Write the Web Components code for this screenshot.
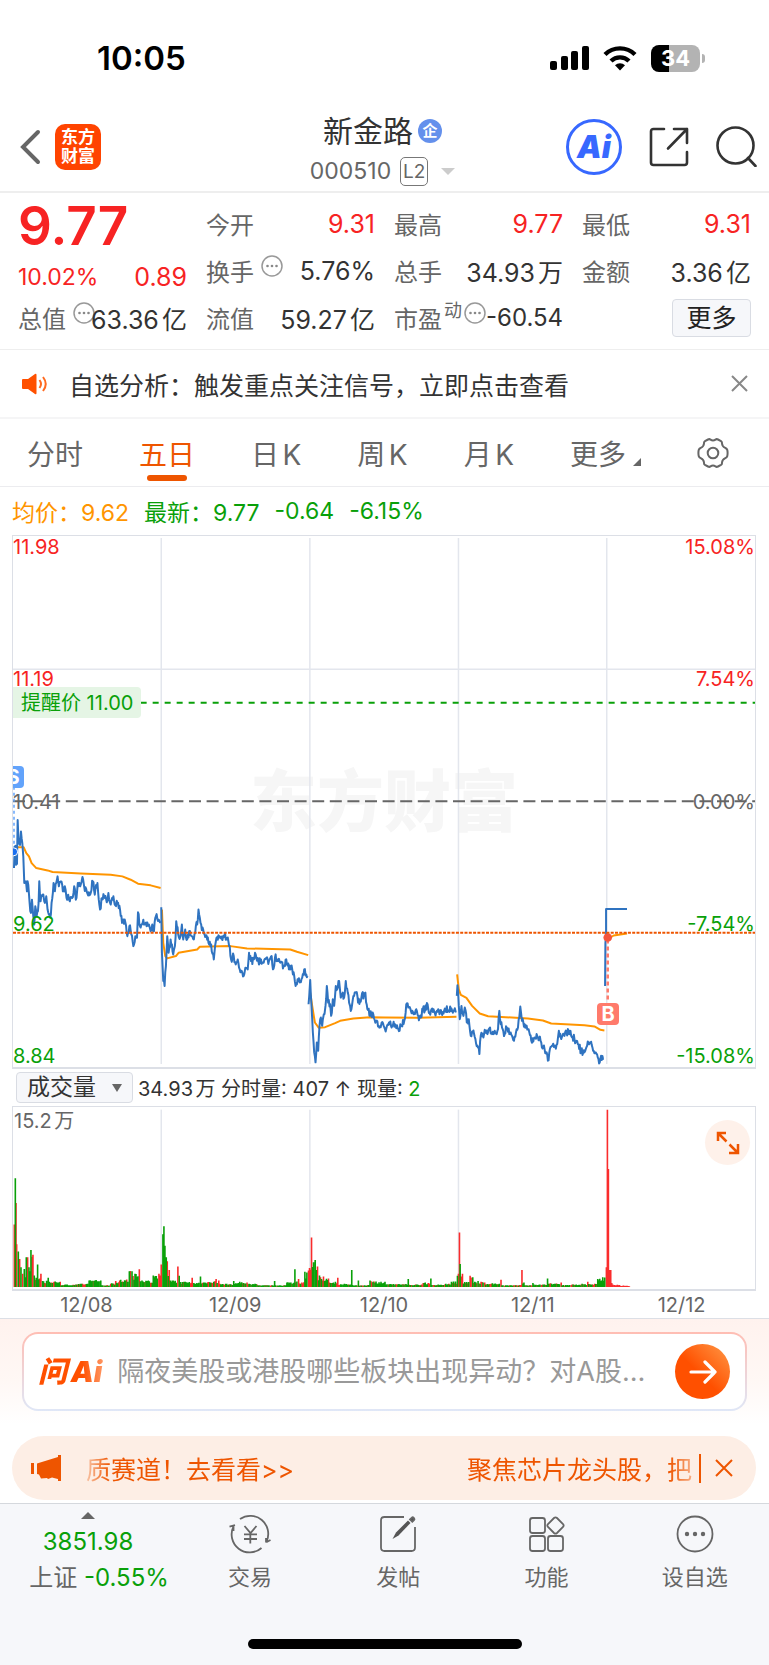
<!DOCTYPE html>
<html lang="zh-CN">
<head>
<meta charset="utf-8">
<meta name="viewport" content="width=device-width, initial-scale=1">
<title>新金路 000510</title>
<style>
  html { background: #f6f7fa; }
  body {
    margin: 0;
    background: #fff;
    color: #333;
    font-family: Inter, "Noto Sans CJK SC", sans-serif;
    font-size: 24px;
    text-autospace: normal;
    --red: #f72323;
    --green: #09a009;
    --orange: #ee5500;
    --gray: #666;
    --line: #dcdfe6;
  }
</style>
</head>
<body>
<status-bar time="10:05" battery="34"></status-bar>
<stock-header name="新金路" code="000510"></stock-header>
<quote-panel></quote-panel>
<notice-bar>自选分析：触发重点关注信号，立即点击查看</notice-bar>
<period-tabs active="1"></period-tabs>
<price-chart></price-chart>
<volume-chart></volume-chart>
<ask-ai></ask-ai>
<promo-ticker>
  <span>质赛道！去看看&gt;&gt;</span>
  <span>聚焦芯片龙头股，把</span>
</promo-ticker>
<bottom-nav></bottom-nav>

<script>
const BASE = `<style>
  *, :host { box-sizing: border-box; }
  :host { display: block; }
  button { font: inherit; color: inherit; background: none; border: 0; padding: 0; margin: 0; cursor: pointer; }
  a { color: inherit; text-decoration: none; }
  svg { display: block; }
</style>`;

class BaseElement extends HTMLElement {
  constructor() {
    super();
    this.attachShadow({ mode: 'open' });
  }
  connectedCallback() {
    this.shadowRoot.innerHTML = BASE + this.template();
  }
}

class StatusBar extends BaseElement {
  template() {
    return `<style>
      :host { display: flex; justify-content: space-between; align-items: center; height: 110px; padding: 6px 64px 0 97px; color: #000; }
      time { font-size: 33px; font-weight: 600; }
      .right { display: flex; align-items: center; gap: 14px; }
      .battery { display: flex; align-items: center; gap: 2px; }
      .level { width: 49px; height: 27px; border-radius: 8px; background: linear-gradient(90deg, #000 36%, #b3b3b3 36%); color: #fff; font-size: 22px; font-weight: 700; line-height: 27px; text-align: center; }
      .cap { width: 3px; height: 9px; border-radius: 0 4px 4px 0; background: #b3b3b3; }
    </style>
    <time>${this.getAttribute('time')}</time>
    <div class="right">
      <svg width="39" height="25" viewBox="0 0 39 25"><rect y="15" width="7" height="9" rx="2"/><rect x="11" y="10" width="7" height="14" rx="2"/><rect x="21" y="5" width="7" height="19" rx="2"/><rect x="32" width="7" height="24" rx="2"/></svg>
      <svg width="34" height="25" viewBox="0 0 34 25" fill="none" stroke="#000" stroke-width="4.4"><path d="M2 8.500a21.500 21.500 0 0 1 30 0"/><path d="M8 15a13 13 0 0 1 18 0"/><path d="M12 19.200a7.500 7.500 0 0 1 10 0L17 24.500z" fill="#000" stroke="none"/></svg>
      <div class="battery"><div class="level">${this.getAttribute('battery')}</div><div class="cap"></div></div>
    </div>`;
  }
}

class StockHeader extends BaseElement {
  template() {
    return `<style>
      :host { display: grid; grid-template-columns: 1fr auto 1fr; align-items: center; height: 83px; padding: 0 12px 0 8px; border-bottom: 2px solid #eee; }
      .left, .right, .name, .code { display: flex; align-items: center; }
      .left { gap: 13px; margin: 0 0 8px 12px; }
      .right { justify-content: flex-end; gap: 27px; margin-bottom: 8px; }
      .logo { width: 46px; height: 46px; border-radius: 10px; background: #ff4400; color: #fff; font-size: 17px; line-height: 19px; font-weight: 700; text-align: center; padding: 4px 2px; }
      .name { justify-content: center; gap: 5px; height: 41px; font-size: 30px; line-height: 40px; }
      .badge { width: 24px; height: 24px; border-radius: 50%; background: #6490ec; color: #fff; font-size: 15px; font-weight: 700; line-height: 24px; text-align: center; }
      .code { gap: 9px; height: 40px; font-size: 23px; color: var(--gray); }
      .l2 { width: 28px; height: 29px; border: 1px solid #777; border-radius: 5px; font-size: 19px; line-height: 27px; text-align: center; }
      .drop { border: 7px solid transparent; border-top: 7px solid #ccc; border-bottom: 0; margin-left: 4px; }
      .ai { width: 56px; height: 56px; border: 3px solid #3768ff; border-radius: 50%; color: #3768ff; font-size: 31px; font-weight: 900; line-height: 48px; font-style: italic; text-align: center; }
    </style>
    <div class="left">
      <button aria-label="返回"><svg width="22" height="36" viewBox="0 0 22 36" fill="none" stroke="#666" stroke-width="4" stroke-linecap="round"><path d="M18 3 3 18l15 15"/></svg></button>
      <div class="logo">东方<br>财富</div>
    </div>
    <div>
      <div class="name"><span>${this.getAttribute('name')}</span><span class="badge">企</span></div>
      <div class="code"><span>${this.getAttribute('code')}</span><span class="l2">L2</span><i class="drop"></i></div>
    </div>
    <div class="right">
      <button class="ai">Ai</button>
      <button aria-label="分享"><svg width="40" height="40" viewBox="0 0 40 40" fill="none" stroke="#333" stroke-width="2.600" stroke-linecap="round" stroke-linejoin="round"><path d="M15 2H4.500Q2 2 2 4.500v31Q2 38 4.500 38h31q2.500 0 2.500-2.500V25M25 2h13v14M38 2 19 21.500"/></svg></button>
      <button aria-label="搜索"><svg width="41" height="41" viewBox="0 0 41 41" fill="none" stroke="#333" stroke-width="2.600" stroke-linecap="round"><circle cx="19.500" cy="19.500" r="18"/><path d="m32 32 7.500 8"/></svg></button>
    </div>`;
  }
}

const MORE_DOTS = `<svg class="dots" width="22" height="22" viewBox="0 0 22 22"><circle cx="11" cy="11" r="10" fill="none" stroke="#999" stroke-width="1.500"/><g fill="#888"><circle cx="6.500" cy="11" r="1.300"/><circle cx="11" cy="11" r="1.300"/><circle cx="15.500" cy="11" r="1.300"/></g></svg>`;

// 一格行情：label + 数值，note 为右上角小字，info 显示说明图标
class QuoteItem extends BaseElement {
  template() {
    const note = this.getAttribute('note');
    return `<style>
      :host { display: flex; justify-content: space-between; align-items: center; height: 47px; font-size: 24px; white-space: nowrap; }
      .label { display: flex; align-items: center; min-width: 0; color: var(--gray); }
      .label svg { flex: none; margin: 0 0 10px 7px; }
      .label sup { font-size: 18px; line-height: 22px; align-self: flex-start; vertical-align: baseline; margin-left: 2px; }
      .label sup + svg { margin-left: 2px; }
      .value { font-size: 25px; }
      :host([up]) .value { color: var(--red); }
      :host([note]) .value { font-size: 24px; }
    </style>
    <span class="label"><span>${this.getAttribute('label')}</span>${note ? `<sup>${note}</sup>` : ''}${this.hasAttribute('info') ? MORE_DOTS : ''}</span>
    <span class="value"><slot></slot></span>`;
  }
}

class QuotePanel extends BaseElement {
  template() {
    return `<style>
      :host { display: grid; grid-template-columns: repeat(4, minmax(0, 1fr)); column-gap: 19px; padding: 7px 18px 8px; border-bottom: 1px solid #eee; color: #333; }
      .main { color: var(--red); }
      .price { height: 60px; font-size: 53px; font-weight: 600; line-height: 52px; }
      .change { display: flex; justify-content: space-between; align-items: center; height: 34px; font-size: 25px; }
      .change span:first-child { font-size: 23px; }
      .main quote-item { color: #333; }
      .more { justify-self: end; align-self: center; width: 79px; height: 38px; background: #f6f7fa; border: 1px solid #d9dce3; border-radius: 4px; font-size: 25px; line-height: 34px; color: #222; }
      .cell { display: grid; grid-template-rows: repeat(3, 47px); }
    </style>
    <div class="main">
      <div class="price">9.77</div>
      <div class="change"><span>10.02%</span><span>0.89</span></div>
      <quote-item label="总值" info>63.36亿</quote-item>
    </div>
    <div class="cell"><quote-item label="今开" up>9.31</quote-item><quote-item label="换手" info>5.76%</quote-item><quote-item label="流值">59.27亿</quote-item></div>
    <div class="cell"><quote-item label="最高" up>9.77</quote-item><quote-item label="总手">34.93万</quote-item><quote-item label="市盈" note="动" info>-60.54</quote-item></div>
    <div class="cell"><quote-item label="最低" up>9.31</quote-item><quote-item label="金额">3.36亿</quote-item><button class="more">更多</button></div>`;
  }
}

class NoticeBar extends BaseElement {
  template() {
    return `<style>
      :host { display: flex; align-items: center; height: 69px; padding: 0 21px; font-size: 25px; border-bottom: 2px solid #f5f5f6; }
      .text { flex: 1; margin-left: 21px; }
    </style>
    <svg width="27" height="22" viewBox="0 0 27 22"><path d="M1 7q0-1 1-1h5l7-5q1.500-1 1.500 1v18q0 2-1.500 1l-7-5H2q-1 0-1-1z" fill="#ff5000"/><path d="M18.500 7q3 4 0 8M22 4q5.500 7 0 14" fill="none" stroke="#ff6a20" stroke-width="2"/></svg>
    <span class="text"><slot></slot></span>
    <button aria-label="关闭"><svg width="17" height="17" viewBox="0 0 17 17" stroke="#888" stroke-width="2"><path d="m1 1 15 15M16 1 1 16"/></svg></button>`;
  }
}

class PeriodTabs extends BaseElement {
  template() {
    const active = Number(this.getAttribute('active'));
    const tabs = ['分时', '五日', '日K', '周K', '月K'].map((name, i) =>
      `<button role="tab" aria-selected="${i === active}">${name}</button>`).join('');
    return `<style>
      :host { display: flex; justify-content: space-between; align-items: center; height: 68px; padding: 0 40px 0 27px; border-bottom: 1px solid #ececef; color: var(--gray); font-size: 28px; }
      button { display: grid; justify-items: center; align-content: center; height: 67px; position: relative; }
      [aria-selected=true] { color: var(--orange); }
      [aria-selected=true]::after { content: ""; position: absolute; left: 50%; bottom: 5px; width: 40px; height: 6px; margin-left: -20px; border-radius: 3px; background: var(--orange); }
      .more { display: flex; align-items: center; gap: 7px; }
      .more svg { align-self: flex-end; margin-bottom: 20px; }
    </style>
    ${tabs}
    <button class="more">更多<svg width="8" height="8" viewBox="0 0 8 8"><path d="M8 0v8H0z" fill="#666"/></svg></button>
    <button aria-label="设置"><svg width="32" height="30" viewBox="0 0 32 30" fill="none" stroke="#666" stroke-width="2"><path d="M11 1.500q1.500-.8 2.500.2 2.500 1.500 5 0 1-1 2.500-.2l3 1.600q1.200.7 1 2.400.3 3 3 4.200 2 .8 2.300 2.300.6 3 0 6-.3 1.500-2.300 2.300-2.700 1.200-3 4.200.2 1.700-1 2.400l-3 1.600q-1.500.8-2.500-.2-2.500-1.500-5 0-1 1-2.500.2l-3-1.600q-1.200-.7-1-2.400-.3-3-3-4.200-2-.8-2.300-2.300-.6-3 0-6 .3-1.500 2.300-2.300 2.700-1.200 3-4.200-.2-1.700 1-2.400z"/><circle cx="16" cy="15" r="5.300"/></svg></button>`;
  }
}

// 固定种子的随机数，保证每次渲染的走势一致
function createRandom(seed) {
  return () => {
    seed = (seed * 16807) % 2147483647;
    return seed / 2147483647;
  };
}

// 在关键点之间补分钟级别的抖动
function fillMinutes(points, amp, random) {
  const out = [];
  for (let i = 0; i < points.length - 2; i += 2) {
    const [x1, y1, x2, y2] = points.slice(i, i + 4);
    out.push(`${x1},${y1}`);
    for (let x = x1 + 2; x < x2 - 1; x += 2) {
      const y = y1 + (y2 - y1) * (x - x1) / (x2 - x1) + (random() - 0.5) * amp;
      out.push(`${x},${y.toFixed(1)}`);
    }
  }
  out.push(points.slice(-2).join());
  return out.join(' ');
}

const PRICE = [
  [39,385,41,320,44,318,45,375,48,372,50,240,53,310,57,315,60,275,64,310,67,350,70,430,75,425,78,455,80,425,86,490,90,520,93,480,97,530,100,555,103,500,107,530,113,490,115,425,119,485,125,465,130,485,136,470,140,510,148,535,152,490,158,430,162,455,170,410,174,440,180,425,186,455,192,440,197,475,202,465,207,485,214,475,220,440,225,480,231,430,238,440,245,412,250,440,260,462,268,465,276,425,282,465,290,430,294,480,298,510,304,475,310,470,318,488,323,460,328,490,338,470,342,495,350,490,358,510,364,550,372,540,380,590,386,560,392,585,398,620,404,590,409,595,412,518,418,560,426,550,432,555,438,560,445,555,450,575,455,555,460,575,466,530,474,540,480,545],
  [482,503,484,640,488,725,492,740,496,680,500,590,504,640,510,600,518,645,523,620,527,545,533,585,540,590,544,555,548,600,554,570,560,600,566,575,574,590,580,600,586,560,590,555,594,510,600,550,608,570,616,590,624,610,632,615,640,660,648,595,656,590,664,597,672,587,680,600,688,620,692,660,700,650,706,675,712,660,718,690,724,695,730,710,735,685,742,690,746,640,752,665,760,660,766,645,774,665,782,660,790,670,798,655,806,665,814,650,818,690,824,655,832,660,840,670,850,680,858,660,866,690,876,690,882,710,886,740,892,720,900,725,906,715,912,690,922,710],
  [925,795,930,722,934,800,938,880,942,940,946,970,950,910,954,935,958,860,962,835,966,860,971,825,976,800,980,740,984,790,990,795,993,830,998,780,1002,800,1007,740,1013,745,1017,725,1022,775,1028,760,1032,775,1037,725,1043,760,1050,800,1054,810,1060,770,1068,760,1074,790,1084,775,1096,760,1102,810,1110,830,1118,820,1128,845,1136,860,1145,850,1155,870,1161,860,1167,850,1175,865,1185,855,1195,870,1205,860,1213,845,1219,795,1225,805,1233,815,1241,825,1249,810,1255,830,1263,835,1269,810,1275,815,1283,795,1289,820,1297,808,1305,822,1315,810,1325,820,1335,808,1345,815,1355,808,1368,820],
  [1371,770,1373,738,1377,800,1380,840,1385,800,1391,830,1395,805,1401,850,1407,840,1413,890,1419,880,1427,900,1433,920,1439,945,1443,890,1451,895,1457,875,1463,885,1471,865,1477,885,1485,875,1491,885,1495,870,1499,815,1503,855,1509,870,1515,885,1521,865,1529,885,1537,890,1543,905,1549,880,1555,865,1562,802,1567,845,1575,855,1585,870,1595,905,1605,895,1615,895,1625,910,1635,930,1641,940,1645,965,1651,930,1657,920,1665,920,1673,915,1678,875,1685,900,1693,885,1701,880,1707,875,1715,890,1725,900,1735,915,1745,935,1755,940,1763,920,1771,910,1779,925,1789,940,1795,955,1801,970,1805,950,1813,960],
];
const LATEST = '1817,740 1818,610 1820,590 1820,508 1883,508';
const AVERAGE = [
  '40,322 68,322 76,340 84,350 92,370 106,385 140,392 155,397 240,401 330,405 365,410 390,420 412,432 450,437 480,445',
  '484,510 488,610 494,650 500,657 526,650 534,640 590,630 598,622 690,620 740,627 870,630 890,637 924,647',
  '930,760 936,800 944,850 956,866 975,864 1005,852 1020,845 1060,838 1110,834 1155,835 1255,836 1370,833',
  '1372,705 1377,750 1383,767 1400,776 1417,800 1440,823 1465,831 1585,838 1630,844 1655,853 1755,858 1785,862 1803,872 1815,874',
  '1823,600 1843,588 1883,582',
];

const GRID_X = [446, 893, 1340, 1786];

class PriceChart extends BaseElement {
  template() {
    const random = createRandom(20251212);
    const prices = PRICE.map((day) => `<polyline points="${fillMinutes(day, 24, random)}"/>`).join('');
    return `<style>
      :host { padding: 0 13px 0 12px; }
      .legend { display: flex; align-items: center; gap: 15px; height: 48px; font-size: 23px; color: var(--green); }
      .avg { color: #ff9500; }
      .plot { position: relative; height: 534px; border: 1px solid var(--line); border-width: 1px 1px 2px; overflow: hidden; font-size: 20px; line-height: 20px; }
      .plot svg { position: relative; width: 100%; height: 100%; }
      .plot svg * { vector-effect: non-scaling-stroke; }
      .mark { position: absolute; inset: 0; display: grid; place-items: center; font-size: 67px; font-weight: 900; color: #f6f6f6; }
      .axis { position: absolute; inset: 0; padding: 1px 0; display: grid; grid-template-rows: repeat(4, 1fr); }
      .axis.r { justify-items: end; }
      .axis.l { justify-items: start; }
      .axis span { grid-column: 1; color: var(--red); }
      .axis span:nth-child(n+4) { color: var(--green); align-self: end; }
      .axis span:nth-child(2) { grid-row: 2; }
      .axis span:nth-child(4) { grid-row: 3; }
      .axis span:nth-child(5) { grid-row: 4; }
      .axis .zero { grid-row: 2 / 4; align-self: center; color: var(--gray); }
      .alert { position: absolute; left: 0; top: 28.500%; display: flex; align-items: center; height: 31px; padding: 0 8px; border-radius: 0 4px 4px 0; background: #e5f5e5; color: var(--green); font-size: 20px; }
      .tag { position: absolute; width: 22px; height: 22px; border-radius: 4px; color: #fff; font-size: 20px; font-weight: 700; line-height: 22px; text-align: center; }
      .buy { left: 80.200%; top: 90%; margin: -11px 0 0 -11px; background: #ff7a6b; }
      .sell { left: -11px; top: 43.300%; background: #62a3fb; }
    </style>
    <div class="legend"><span class="avg">均价：9.62</span><span>最新：9.77</span><span>-0.64</span><span>-6.15%</span></div>
    <div class="plot">
      <div class="mark">东方财富</div>
      <svg viewBox="0 0 2232 1599" preserveAspectRatio="none" fill="none">
        <g stroke="#e3e6ed" stroke-width="1.500">${GRID_X.map((x) => `<path d="M${x} 6V1590"/>`).join('')}<path d="M0 401H2232"/></g>
        <path d="M384 502H2232" stroke="#09a009" stroke-width="2" stroke-dasharray="6 6"/>
        <path d="M0 799H2232" stroke="#666" stroke-width="2" stroke-dasharray="12 5.600"/>
        <g transform="translate(-36 615)" stroke-linejoin="round">
          <path d="M39 140V330" stroke="#62a3fb" stroke-width="1.500" stroke-dasharray="3 3"/>
          <g stroke="#ff9500" stroke-width="2">${AVERAGE.map((p) => `<polyline points="${p}"/>`).join('')}</g>
          <g stroke="#2f73c0" stroke-width="2">${prices}<polyline points="${LATEST}"/></g>
          <circle cx="38" cy="336" r="12" fill="#1a6ff0" stroke="#fff"/>
          <path d="M1825 600V790" stroke="#ff7a6b" stroke-width="2.500" stroke-dasharray="4 3"/>
          <circle cx="1825" cy="594" r="13" fill="#f4543c"/>
        </g>
        <path d="M0 1195H2232" stroke="#ee5500" stroke-width="2" stroke-dasharray="3 1.300"/>
      </svg>
      <div class="alert">提醒价 11.00</div>
      <div class="axis l"><span>11.98</span><span>11.19</span><span class="zero">10.41</span><span>9.62</span><span>8.84</span></div>
      <div class="axis r"><span>15.08%</span><span>7.54%</span><span class="zero">0.00%</span><span>-7.54%</span><span>-15.08%</span></div>
      <div class="tag sell">S</div>
      <div class="tag buy">B</div>
    </div>`;
  }
}

// x, 高度；负数为下跌（绿）
const VOLUME = [40,190,43,-330,45,255,47,130,52,-108,56,85,60,-60,65,40,70,-55,76,-90,80,90,84,-60,90,-112,96,98,100,-35,110,-68,120,40,125,-18,142,-28,160,16,178,16,190,-6,230,8,265,-20,283,-20,300,-20,310,4,330,10,345,18,360,-22,386,-48,394,-48,403,-40,416,54,424,-20,440,-18,458,-35,475,40,482,68,487,-160,490,-184,493,-125,497,-90,500,78,506,52,515,-20,532,62,536,-34,545,-15,575,28,580,-12,600,-32,610,-14,640,-16,647,24,655,20,670,8,700,-18,740,14,770,8,810,4,823,-18,830,4,860,-14,884,-54,895,24,905,14,914,-46,925,50,928,58,934,150,940,-75,945,-82,952,62,958,-35,970,32,985,26,1000,-14,1013,28,1030,-8,1055,-52,1062,-4,1075,-20,1090,4,1110,-20,1155,-16,1165,8,1185,-8,1215,8,1225,-24,1235,6,1270,12,1293,-26,1300,6,1335,8,1355,-16,1373,-34,1376,40,1379,165,1381,-70,1388,40,1395,-15,1411,34,1419,-30,1435,-18,1455,14,1475,10,1504,22,1515,4,1560,6,1567,52,1573,-14,1585,-4,1600,-12,1625,6,1644,-26,1650,10,1685,14,1695,4,1715,6,1745,8,1765,16,1780,8,1795,-24,1810,-30,1821,60,1824,538,1827,358,1830,52,1834,52,1837,12,1845,6,1860,6,1867,3,1877,3,1890,2];

class VolumeChart extends BaseElement {
  bars() {
    const random = createRandom(407);
    const up = [], down = [];
    for (let i = 0; i < VOLUME.length; i += 2) {
      const x = VOLUME[i], h = VOLUME[i + 1];
      (h > 0 ? up : down).push(`M${x - 36} 546v${-Math.abs(h)}`);
      const next = VOLUME[i + 2] || x;
      for (let m = x + 3; m < next - 2; m += 3) {
        const base = Math.min(Math.abs(h), Math.abs(VOLUME[i + 3]));
        const v = (base * (0.5 + random() * 0.5) + 2).toFixed(1);
        (random() < (x > 1830 ? 1 : 0.3) ? up : down).push(`M${m - 36} 546v-${v}`);
      }
    }
    return `<path d="${up.join('')}" stroke="#fa2c2c"/><path d="${down.join('')}" stroke="#09a009"/>`;
  }
  template() {
    return `<style>
      :host { padding: 0 13px 0 12px; border-bottom: 1px solid var(--line); }
      .bar { display: flex; align-items: center; height: 37px; padding-left: 4px; font-size: 20px; white-space: pre; }
      .pick { display: flex; align-items: center; position: relative; margin-right: 5px; }
      select { appearance: none; width: 117px; height: 31px; padding: 0 0 2px 10px; border: 1px solid #d9dce3; border-radius: 4px; background: #f6f7fa; font: inherit; font-size: 23px; color: #333; }
      .pick svg { position: absolute; right: 11px; }
      .info { text-autospace: no-autospace; }
      b { font-weight: 400; color: var(--green); }
      .plot { position: relative; height: 185px; border: 1px solid var(--line); border-bottom-width: 2px; font-size: 20px; line-height: 26px; color: var(--gray); }
      .plot > svg { width: 100%; height: 100%; }
      .plot > svg * { vector-effect: non-scaling-stroke; }
      .max { position: absolute; left: 1px; top: 1px; }
      .full { position: absolute; right: 5px; top: 13px; width: 45px; height: 45px; border-radius: 50%; background: #fef1ea; display: grid; place-items: center; }
      .dates { display: grid; grid-template-columns: repeat(5, 1fr); height: 27px; font-size: 20px; line-height: 28px; text-align: center; color: var(--gray); }
    </style>
    <div class="bar"><label class="pick"><select aria-label="指标"><option>成交量</option></select><svg width="10" height="8" viewBox="0 0 10 8"><path d="M0 0h10L5 8z" fill="#666"/></svg></label><span>34.93万</span><span class="info"> 分时量: 407 ↑ 现量: <b>2</b></span></div>
    <div class="plot">
      <svg viewBox="0 0 2232 552" preserveAspectRatio="none" fill="none">
        <g stroke="#e3e6ed" stroke-width="1.500">${GRID_X.slice(0, 3).map((x) => `<path d="M${x} 8V546"/>`).join('')}</g>
        <g stroke-width="1.600">${this.bars()}</g>
      </svg>
      <span class="max">15.2万</span>
      <button class="full" aria-label="全屏"><svg width="24" height="24" viewBox="0 0 24 24" fill="none" stroke="#ee5500" stroke-width="2.500"><path d="M2 10V2h8M2 2l8.500 8.500M22 13v9h-9M22 22l-8.500-8.500"/></svg></button>
    </div>
    <div class="dates"><span>12/08</span><span>12/09</span><span>12/10</span><span>12/11</span><span>12/12</span></div>`;
  }
}

class AskAi extends BaseElement {
  template() {
    return `<style>
      :host { padding: 13px 22px 13px; background: linear-gradient(#fff2ee, #fff8f5 60%, #fff); }
      form { display: flex; align-items: center; height: 79px; margin: 0; padding: 0 15px 0 14px; border: 2px solid transparent; border-radius: 16px; background: linear-gradient(#fff, #fff) padding-box, linear-gradient(#ffbdb3, #dfe7f7) border-box; }
      .brand { font-size: 29px; font-weight: 900; font-style: italic; line-height: 36px; background: linear-gradient(90deg, #ff5000 65%, #ffa070); -webkit-background-clip: text; color: transparent; padding-right: 4px; }
      input { flex: 1; min-width: 0; height: 50px; border: 0; outline: 0; padding: 0; margin-left: 11px; margin-right: 12px; background: none; font: inherit; font-size: 27px; text-autospace: no-autospace; text-overflow: ellipsis; }
      input::placeholder { color: #999; opacity: 1; }
      button { width: 55px; height: 55px; border-radius: 50%; background: linear-gradient(45deg, #ff5000 45%, #ff9a48); display: grid; place-items: center; }
    </style>
    <form>
      <span class="brand">问Ai</span>
      <input type="text" aria-label="问Ai" placeholder="隔夜美股或港股哪些板块出现异动？对A股…">
      <button type="button" aria-label="发送"><svg width="28" height="24" viewBox="0 0 28 24" fill="none" stroke="#fff" stroke-width="3.200" stroke-linecap="round" stroke-linejoin="round"><path d="M2 12h24M16 2l10 10-10 10"/></svg></button>
    </form>`;
  }
}

class PromoTicker extends BaseElement {
  template() {
    return `<style>
      :host { display: flex; align-items: center; height: 64px; margin: 12px 13px 3px 12px; padding: 0 23px 0 19px; border-radius: 32px; background: #fdeee5; color: var(--orange); font-size: 25px; }
      .track { flex: 1; display: flex; justify-content: space-between; margin-left: 25px; padding-right: 7px; white-space: nowrap; -webkit-mask: linear-gradient(90deg, #0004, #000 24px, #000 calc(100% - 30px), #0004); mask: linear-gradient(90deg, #0004, #000 24px, #000 calc(100% - 30px), #0004); }
      i { width: 2px; height: 29px; background: var(--orange); margin-right: 14px; }
    </style>
    <svg width="30" height="26" viewBox="0 0 30 26" fill="#ee5500"><path d="M0 8h3v11H0zM6 8.500 27 2V0h3v26h-3v-2l-6-1.500-4 1.500-1-1-6 .5-2-4-2-.5z"/></svg>
    <div class="track"><slot></slot></div>
    <i></i>
    <button aria-label="关闭"><svg width="18" height="18" viewBox="0 0 18 18" stroke="#ee5500" stroke-width="2"><path d="m1 1 16 16M17 1 1 17"/></svg></button>`;
  }
}

const NAV_ICONS = {
  交易: '<path d="M11 5A18 18 0 0 1 37.600 27.300M37.300 28.200l4.200-2.200M37 28.500V24M32.500 34A18 18 0 0 1 4.500 12.500L4.500 17M.5 12.700l5.500-1.500"/><path d="m15.500 12 6 7 6-7M21.300 19v10.500M15 20.300h13M15 25h13"/>',
  发帖: '<path d="M27 3H7.500Q4 3 4 6.500v27Q4 37 7.500 37h27q3.500 0 3.500-3.500V13"/><path d="m15.500 25 3.500-6.500L31 6.500l2.500 2.500L21.500 21.500z" fill="#555" stroke="none"/><path d="m33 5.500 1.700-1.700q1-1 2 0l.3.300q1 1 0 2l-1.700 1.700z" fill="#555"/>',
  功能: '<rect x="4" y="4" width="15" height="15" rx="2.500"/><rect x="4" y="22" width="15" height="15" rx="2.500"/><rect x="22" y="22" width="15" height="15" rx="2.500"/><path d="M28 4q1.500-1.300 3 0l6 6q1.300 1.500 0 3l-6 6q-1.500 1.300-3 0l-6-6q-1.300-1.500 0-3z"/>',
  设自选: '<circle cx="21" cy="20" r="17.500"/><g fill="#666" stroke="none"><circle cx="13" cy="20" r="2.200"/><circle cx="21" cy="20" r="2.200"/><circle cx="29" cy="20" r="2.200"/></g>',
};

class BottomNav extends BaseElement {
  template() {
    const items = Object.entries(NAV_ICONS).map(([name, icon]) => `<button class="item">
      <svg width="42" height="40" viewBox="0 0 42 40" fill="none" stroke="#666" stroke-width="1.800">${icon}</svg><span>${name}</span></button>`).join('');
    return `<style>
      :host { background: #f6f7fa; border-top: 1px solid #d5d8dd; color: var(--gray); padding-bottom: 16px; }
      nav { display: grid; grid-template-columns: 176px repeat(4, 1fr); height: 135px; }
      .item, .index { display: flex; flex-direction: column; align-items: center; white-space: nowrap; }
      .item { padding-top: 10px; font-size: 22px; line-height: 32px; gap: 7px; }
      .index { padding-top: 8px; font-size: 24px; line-height: 32px; }
      .index strong { font-weight: 400; color: var(--green); }
      .index svg { margin-bottom: 7px; }
      .index div { margin: 4px 0 0 22px; }
      .home { width: 274px; height: 10px; border-radius: 5px; background: #000; margin: 0 auto; }
    </style>
    <nav>
      <a class="index" href="#sh">
        <svg width="14" height="7" viewBox="0 0 14 7"><path d="M7 0l7 7H0z" fill="#666"/></svg>
        <strong>3851.98</strong>
        <div>上证 <strong>-0.55%</strong></div>
      </a>
      ${items}
    </nav>
    <div class="home"></div>`;
  }
}

customElements.define('status-bar', StatusBar);
customElements.define('stock-header', StockHeader);
customElements.define('quote-item', QuoteItem);
customElements.define('quote-panel', QuotePanel);
customElements.define('notice-bar', NoticeBar);
customElements.define('period-tabs', PeriodTabs);
customElements.define('price-chart', PriceChart);
customElements.define('volume-chart', VolumeChart);
customElements.define('ask-ai', AskAi);
customElements.define('promo-ticker', PromoTicker);
customElements.define('bottom-nav', BottomNav);
</script>
</body>
</html>
